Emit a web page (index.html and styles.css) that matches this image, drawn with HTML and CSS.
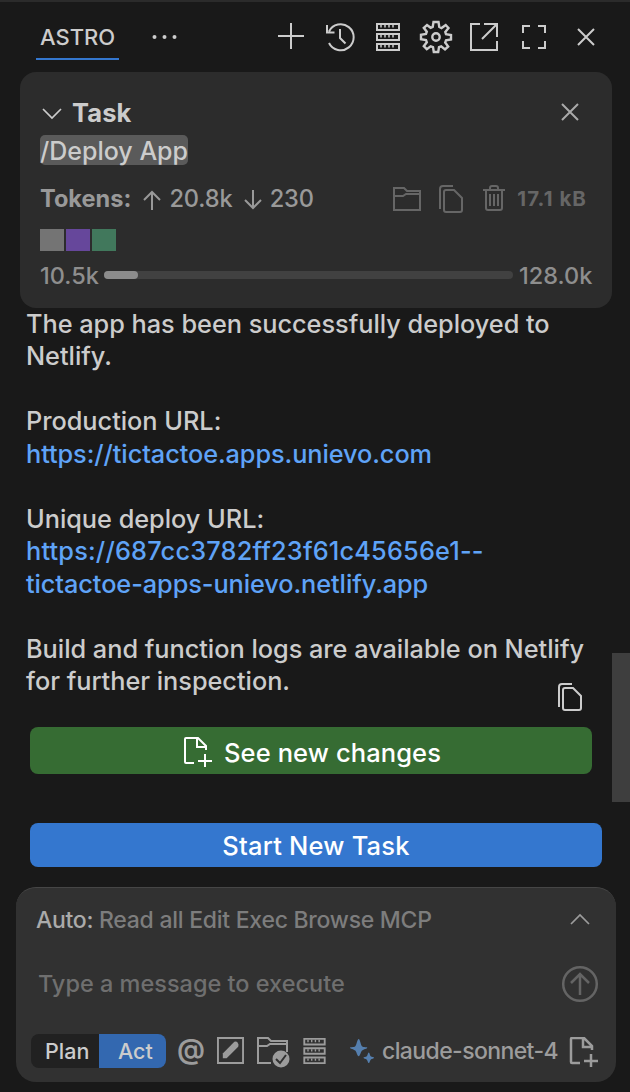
FILE: index.html
```html
<!DOCTYPE html>
<html lang="en">
<head>
<meta charset="utf-8">
<title>Astro</title>
<link rel="stylesheet" href="styles.css">
</head>
<body>
<svg class="sprite" aria-hidden="true">
  <symbol id="copy" viewBox="0 0 24 28"><path d="M1 24V4Q1 1 4 1H14M7 5H15L23 13V25Q23 27 21 27H7Q5 27 5 25V7Q5 5 7 5Z"/></symbol>
  <symbol id="server" viewBox="0 0 24 28"><path d="M1 1H23V7H1ZM1 11H23V17H1ZM1 21H23V27H1Z"/><path class="tick" d="M5 2V4.500M9 2V4.500M13 2V4.500M17 2V4.500M5 12V14.500M9 12V14.500M13 12V14.500M17 12V14.500M5 22V24.500M9 22V24.500M13 22V24.500M17 22V24.500"/></symbol>
  <symbol id="close" viewBox="0 0 18 18"><path d="M1 1L17 17M17 1L1 17"/></symbol>
  <symbol id="newfile" viewBox="0 0 30 30"><path d="M11 26H3Q2 26 2 25V2Q2 1 3 1H15L23 9V13M14 1V10H23M22 17V31M15 24H29"/></symbol>
</svg>

<header class="titlebar">
  <div class="tab"><span class="t-astro">ASTRO</span></div>
  <svg class="dots" viewBox="0 0 26 4"><circle cx="2.500" cy="2" r="2"/><circle cx="12.500" cy="2" r="2"/><circle cx="22.500" cy="2" r="2"/></svg>
  <nav class="actions">
    <svg class="icon" viewBox="0 0 32 32"><path d="M16 2V28M3 15H29"/></svg>
    <svg class="icon" viewBox="0 0 32 32"><path d="M5 22A13 13 0 1 0 5 10.500M3 4V11.500H10.500M16 8V17L21.500 22.500"/></svg>
    <svg class="icon server"><use href="#server"/></svg>
    <svg class="icon gear" viewBox="0 0 32 32"><path d="M13.500 1H18.500L19.300 6L21.500 7L25.700 4L28.500 7L25.300 11L26 13.200L31 14V18.500L26 19.300L25.200 21.500L28.200 25.500L25 28.500L21.200 25.400L19 26.200L18.200 31H13.800L13 26.200L10.700 25.400L6.800 28.200L3.800 25.200L6.800 21.200L6 19L1 18.200V13.800L6 13L6.800 10.700L3.800 6.800L7 4L10.700 6.800L12.700 6Z"/><circle cx="16" cy="16" r="3.700"/></svg>
    <svg class="icon" viewBox="0 0 32 32"><path d="M12 3H3V29H29V20M16 3H29V16M28.500 3.500L14 18"/></svg>
    <svg class="icon full" viewBox="0 0 32 32"><path d="M5 12V5H12M20 5H27V12M27 20V27H20M12 27H5V20"/></svg>
    <svg class="icon x"><use href="#close"/></svg>
  </nav>
</header>

<section class="task">
  <div class="task-head">
    <svg class="chevron" viewBox="0 0 20 11"><path d="M1 1L10 10L19 1"/></svg>
    <strong class="t-task">Task</strong>
    <svg class="icon x"><use href="#close"/></svg>
  </div>
  <div class="prompt"><span class="chip">/Deploy App</span></div>
  <div class="tokens">
    <strong class="t-tokens">Tokens:</strong>
    <svg class="arrow" viewBox="0 0 18 20"><path d="M9 20V2M1 10L9 2L17 10"/></svg>
    <span class="t-up">20.8k</span>
    <svg class="arrow down" viewBox="0 0 18 20"><path d="M9 0V18M1 10L9 18L17 10"/></svg>
    <span class="t-down">230</span>
    <div class="tools">
      <svg class="folder" viewBox="0 0 28 24"><path d="M1 1H11L14 4H27V23H1ZM1 9H10L13 7H27"/></svg>
      <svg class="copy"><use href="#copy"/></svg>
      <svg class="trash" viewBox="0 0 22 26"><path d="M0 5H22M3 5V23Q3 25 5 25H17Q19 25 19 23V5M7 5V3Q7 1 9 1H13Q15 1 15 3V5M7 9V21M11 9V21M15 9V21"/></svg>
      <strong class="t-size">17.1 kB</strong>
    </div>
  </div>
  <div class="swatches"><i class="gray"></i><i class="purple"></i><i class="green"></i></div>
  <div class="context">
    <span class="t-used">10.5k</span>
    <div class="bar"><div class="fill"></div></div>
    <span class="t-max">128.0k</span>
  </div>
</section>

<main class="chat">
  <div class="message">
    <p><span>The app has been successfully deployed to</span><br><span>Netlify.</span></p>
    <p><span>Production URL:</span><br><a>https://tictactoe.apps.unievo.com</a></p>
    <p><span>Unique deploy URL:</span><br><a class="hash">https://687cc3782ff23f61c45656e1--</a><br><a>tictactoe-apps-unievo.netlify.app</a></p>
    <p><span>Build and function logs are available on Netlify</span><br><span>for further inspection.</span></p>
  </div>
  <svg class="copy message-copy"><use href="#copy"/></svg>
  <button class="changes"><svg class="newfile"><use href="#newfile"/></svg><span class="t-see">See new changes</span></button>
  <button class="start"><span class="t-start">Start New Task</span></button>
  <div class="scrollbar"></div>
</main>

<footer class="composer">
  <div class="auto"><span class="t-auto">Auto:</span><span class="t-perms">Read all Edit Exec Browse MCP</span>
    <svg class="chevron" viewBox="0 0 20 11"><path d="M1 10L10 1L19 10"/></svg></div>
  <div class="entry"><span class="t-type">Type a message to execute</span>
    <svg class="send" viewBox="0 0 36 36"><circle cx="18" cy="18" r="16.800"/><path d="M18 29V8M9 17L18 8L27 17"/></svg></div>
  <div class="bottom">
    <div class="toggle"><span class="plan"><span class="t-plan">Plan</span></span><span class="act"><span class="t-act">Act</span></span></div>
    <span class="at">@</span>
    <svg class="edit" viewBox="0 0 28 28"><path d="M1 1H27V27H1Z"/><path class="solid" d="M6 22V17L18 5Q20 4 21.500 6T22 10L10 22Z"/></svg>
    <svg class="foldercheck" viewBox="0 0 32 32"><path d="M14 27H1V2H11L14 5H30V16M1 10H10L13 8H30"/><circle class="solid" cx="24" cy="23" r="8.500"/><path class="check" d="M19 23L23 27L29 19"/></svg>
    <svg class="server"><use href="#server"/></svg>
    <svg class="sparkle" viewBox="0 0 26 26"><path d="M9 0C10.500 0 11 6 12.500 7.500S18 8 18 9S14 10.500 12.500 12S10.500 18 9 18S7 13.500 5.500 12S0 10 0 9S4 9 5.500 7.500S7.500 0 9 0ZM19.500 14C20.500 14 20.500 17 21.500 18S25 18.700 25 19.500S22.500 20.500 21.500 21.500S20.500 25 19.500 25S18.500 22.500 17.500 21.500S14 20.500 14 19.500S16.500 19 17.500 18S18.500 14 19.500 14Z"/></svg>
    <span class="t-model">claude-sonnet-4</span>
    <svg class="newfile"><use href="#newfile"/></svg>
  </div>
</footer>
</body>
</html>
```
FILE: styles.css
```css
* { box-sizing: border-box; }
body { margin: 0; width: 630px; height: 1092px; overflow: hidden; display: flex; flex-direction: column; background: #191919; color: #ccc; border-top: 2px solid #2b2b2b; font: 450 25px/32.5px Inter, "Noto Sans", sans-serif; }
svg { display: block; flex: none; overflow: visible; fill: none; stroke: currentColor; stroke-width: 2; }
span, strong, a { white-space: nowrap; }
p { margin: 0; }
.sprite { position: absolute; width: 0; height: 0; }
.tick { stroke-width: 1.5; }
.solid { fill: currentColor; stroke: none; }

.titlebar { height: 70px; flex: none; display: flex; padding-left: 36px; }
.tab { width: 83px; height: 58px; padding: 19px 0 0 4px; border-bottom: 2px solid #3477cf; font-size: 22px; }
.dots { width: 26px; height: 4px; margin: 33px 0 0 33px; fill: currentColor; stroke: none; }
.actions { display: flex; margin: 19px 0 0 97px; gap: 16px; height: 32px; align-items: center; }
.icon { width: 32px; height: 32px; }
.icon.server { width: 24px; height: 28px; margin: 0 4px; }
.icon.gear { stroke-width: 2.4; }
.icon:nth-child(1) { margin-right: 1px; }
.icon.full { margin-left: 2px; }
.icon.x { width: 18px; height: 18px; }
.actions .x { margin-left: 11px; }

.task { height: 236px; flex: none; margin: 0 18px 0 20px; padding: 24px 20px 0; border-radius: 16px; background: #2c2c2c; color: #999; }
.task-head { height: 34px; display: flex; align-items: center; color: #ccc; }
.chevron { width: 20px; height: 11px; stroke-width: 1.7; }
.task-head .chevron { margin: 0 10px 0 2px; }
.t-task { font-size: 25.5px; letter-spacing: .1px; }
.task-head .x { margin: 0 13px 2px auto; color: #aaa; }
.prompt { height: 40px; padding-top: 5px; display: flex; color: #ccc; }
.chip { width: 148px; height: 30px; line-height: 32px; border-radius: 5px; background: #5a5a5a; }
.tokens { height: 56px; padding-top: 2px; display: flex; align-items: center; font-size: 23.600px; }
.t-up, .t-down { letter-spacing: -.1px; }
.arrow { width: 18px; height: 20px; margin: 2px 8px 0 12px; }
.arrow.down { margin-left: 11px; margin-right: 8px; }
.tools { display: flex; align-items: center; margin: 0 5px 0 auto; color: #666; font-size: 20.500px; letter-spacing: 1.050px; }
.folder { width: 28px; height: 24px; margin-right: 18px; }
.copy { width: 24px; height: 28px; }
.trash { width: 22px; height: 26px; margin: 0 12px 2px 20px; }
.swatches { display: flex; gap: 2px; padding-top: 3px; height: 29px; }
.swatches i { width: 24px; height: 22px; }
.gray { background: #747474; }
.purple { background: #66479b; }
.green { background: #41785c; }
.context { height: 38px; padding-top: 2px; display: flex; align-items: center; font-size: 23.500px; color: #8e8e8e; }
.t-used { width: 64px; flex: none; padding-top: 3px; }
.t-max { padding-top: 3px; }
.bar { width: 409px; height: 8px; margin-right: 6px; border-radius: 4px; background: #414141; flex: none; }
.fill { width: 34px; height: 8px; border-radius: 4px; background: #8c8c8c; }

.chat { height: 579px; flex: none; position: relative; display: flex; flex-direction: column; padding-left: 26px; }
.message { height: 374.5px; margin-top: -.5px; padding-bottom: 1px; display: flex; flex-direction: column; gap: 32.5px; font-size: 25.300px; letter-spacing: -.02px; }
.message + svg { margin-top: 1px; }
.message a { color: #5fa3f7; letter-spacing: -.07px; }
.message .hash { letter-spacing: .2px; }
.message-copy { margin-left: 532px; }
button { display: flex; align-items: center; justify-content: center; border: 0; border-radius: 8px; margin: 0 0 0 4px; padding: 0; color: #fff; font: inherit; flex: none; }
.changes { width: 562px; height: 47px; margin-top: 16px; gap: 11px; padding: 5px 0 0 2px; background: #366c33; }
.start { width: 572px; height: 44px; margin-top: 49px; padding-top: 2px; background: #3477cf; }
.t-see, .t-start { font-size: 25.500px; letter-spacing: .1px; }
.t-start { letter-spacing: .2px; }
.newfile { width: 30px; height: 30px; }
.changes .newfile { margin-bottom: 2px; }
.scrollbar { position: absolute; right: 0; top: 345px; width: 18px; height: 149px; background: #3e3e3e; }

.composer { width: 600px; height: 195px; flex: none; margin-left: 16px; border-radius: 20px; background: #313131; border-top: 1px solid #464646; color: #9c9c9c; font-size: 23px; }
.auto { height: 65px; padding: 0 26px 0 20px; display: flex; align-items: center; }
.auto .chevron { margin-left: auto; margin-bottom: 2px; }
.t-auto { color: #aaa; width: 63px; letter-spacing: -.3px; }
.t-perms { color: #7d7d7d; letter-spacing: -.26px; }
.entry { height: 62px; padding: 0 18px 0 22px; display: flex; align-items: center; color: #6f6f6f; font-size: 23.500px; }
.send { width: 36px; height: 36px; margin-left: auto; color: #646464; stroke-width: 2.5; }
.bottom { height: 67px; padding: 4px 0 0 15px; display: flex; align-items: center; }
.toggle { width: 135px; height: 34px; display: flex; border-radius: 8px; overflow: hidden; font-size: 21.500px; line-height: 34px; color: #ccc; flex: none; }
.plan { width: 68px; padding-left: 14px; background: #212121; }
.act { width: 67px; padding-left: 19px; background: #3368b0; }
.at { width: 27px; margin: -2px 0 0 11px; font-size: 28px; font-weight: 600; letter-spacing: -1px; }
.edit { width: 27px; height: 27px; margin-left: 13px; }
.foldercheck { width: 32px; height: 32px; margin: 3px 0 0 13px; }
.check { stroke: #313131; }
.bottom .server { width: 23px; height: 26px; margin-left: 14px; }
.sparkle { width: 25px; height: 25px; margin: 2px 7px 0 24px; fill: #557fae; stroke: none; }
.t-model { letter-spacing: -.6px; padding-top: 2px; }
.bottom .newfile { margin: 3px 0 0 auto; margin-right: 17px; stroke-width: 2.5; }
```
